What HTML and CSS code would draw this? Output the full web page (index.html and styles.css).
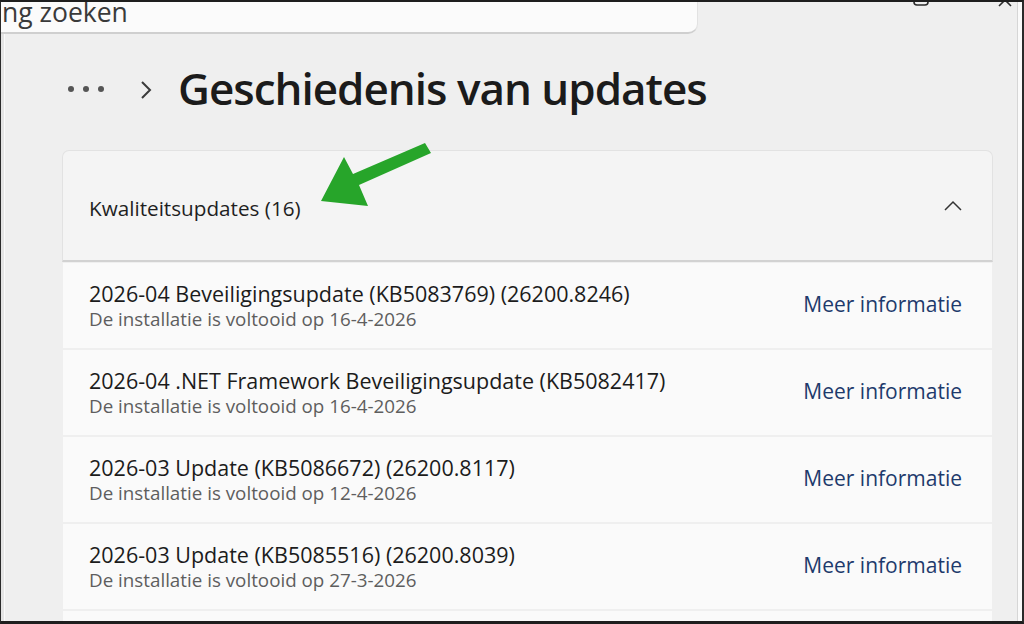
FILE: index.html
```html
<!DOCTYPE html>
<html lang="nl">
<head>
<meta charset="utf-8">
<title>Geschiedenis van updates</title>
<link rel="stylesheet" href="styles.css">
</head>
<body>
<div class="frame">
  <div class="topbar">
    <div class="search">ng zoeken</div>
    <div class="caption">
      <svg class="cap-restore" width="16" height="6" viewBox="0 0 16 6"><path d="M1 -4 V1 Q1 4 4 4 H12 Q15 4 15 1 V-4" fill="none" stroke="#2b2b2b" stroke-width="1.6"/></svg>
      <svg class="cap-close" width="20" height="6" viewBox="0 0 20 6"><path d="M10 -1 L4 5 M10 -1 L16 5" fill="none" stroke="#2b2b2b" stroke-width="1.6"/></svg>
    </div>
  </div>
  <main class="content">
    <div class="crumbs">
      <span class="dots"><i></i><i></i><i></i></span>
      <svg class="chev" width="14" height="20" viewBox="0 0 14 20"><path d="M3 2 L11 10 L3 18" fill="none" stroke="#3a3a3a" stroke-width="2"/></svg>
      <h1 class="title">Geschiedenis van updates</h1>
    </div>
    <section class="card">
      <div class="card-head">
        <span class="head-label">Kwaliteitsupdates (16)</span>
        <svg class="up" width="20" height="12" viewBox="0 0 20 12"><path d="M2 10 L10 2 L18 10" fill="none" stroke="#333" stroke-width="1.5"/></svg>
      </div>
      <div class="rows">
        <div class="row">
          <div class="row-text">
            <div class="row-title">2026-04 Beveiligingsupdate (KB5083769) (26200.8246)</div>
            <div class="row-sub">De installatie is voltooid op 16-4-2026</div>
          </div>
          <a class="more">Meer informatie</a>
        </div>
        <div class="row">
          <div class="row-text">
            <div class="row-title">2026-04 .NET Framework Beveiligingsupdate (KB5082417)</div>
            <div class="row-sub">De installatie is voltooid op 16-4-2026</div>
          </div>
          <a class="more">Meer informatie</a>
        </div>
        <div class="row">
          <div class="row-text">
            <div class="row-title">2026-03 Update (KB5086672) (26200.8117)</div>
            <div class="row-sub">De installatie is voltooid op 12-4-2026</div>
          </div>
          <a class="more">Meer informatie</a>
        </div>
        <div class="row">
          <div class="row-text">
            <div class="row-title">2026-03 Update (KB5085516) (26200.8039)</div>
            <div class="row-sub">De installatie is voltooid op 27-3-2026</div>
          </div>
          <a class="more">Meer informatie</a>
        </div>
        <div class="row"></div>
      </div>
    </section>
  </main>
  <svg class="arrow" width="140" height="90" viewBox="0 0 140 90"><path d="M20 66 L43 22 L52 39 L124 8 L130 18 L58 50 L67 71 Z" fill="#27a52a"/></svg>
</div>
</body>
</html>
```
FILE: styles.css
```css
* { box-sizing: border-box; }
html, body { margin: 0; padding: 0; }
body {
  width: 1024px;
  height: 624px;
  overflow: hidden;
  background: #1e1e1e;
  font-family: "Open Sans", "Noto Sans", sans-serif;
}
.frame {
  position: relative;
  width: 1024px;
  height: 624px;
  overflow: hidden;
  background: #efefef;
  border-top: 2px solid #1e1e1e;
  border-left: 1px solid #2a2a2a;
  border-bottom: 3px solid #1e1e1e;
  border-right: 2px solid #2a2a2a;
  box-shadow: inset -4px 0 0 #fafafa, inset -5px 0 0 #d6d6d6, inset 3px 0 0 #e4e4e4, inset 4px 0 0 #fafafa;
}
.topbar {
  display: flex;
  height: 36px;
  align-items: flex-start;
}
.search {
  width: 697px;
  height: 35px;
  margin-top: -3px;
  background: #fbfbfb;
  border-bottom: 2px solid #cfcfcf;
  border-right: 1px solid #e2e2e2;
  border-bottom-right-radius: 10px;
  font-size: 26.5px;
  line-height: 26px;
  color: #3a3a3a;
  padding-left: 1px;
  position: relative;
  z-index: 1;
}
.caption {
  flex: 1;
  display: flex;
  align-items: flex-start;
}
.cap-restore { margin-left: 215px; margin-top: -1px; }
.cap-close { margin-left: 66px; margin-top: -1px; }
.content {
  padding-left: 61px;
}
.crumbs {
  display: flex;
  align-items: center;
  height: 112px;
  padding-bottom: 12px;
}
.dots {
  display: flex;
  gap: 9px;
  margin-left: 6px;
  margin-top: 2px;
}
.dots i {
  display: block;
  width: 6px;
  height: 6px;
  border-radius: 50%;
  background: #555;
}
.chev { margin-left: 35px; margin-top: 4px; }
.title {
  margin: 0 0 0 25px;
  font-size: 44px;
  font-weight: 600;
  letter-spacing: -1px;
  color: #1b1b1b;
  line-height: 1;
}
.card {
  width: 931px;
}
.card-head {
  height: 112px;
  background: #f4f4f4;
  border: 1px solid #e2e2e2;
  border-bottom: 2px solid #d2d2d2;
  border-radius: 7px 7px 0 0;
  display: flex;
  align-items: center;
  padding: 0 29px 0 26px;
}
.head-label {
  flex: 1;
  font-size: 20.7px;
  color: #1f1f1f;
  margin-top: 4px;
}
.up { margin-top: 0; }
.rows {
  display: flex;
  flex-direction: column;
  gap: 2px;
  padding-top: 1px;
  width: 929px;
  margin-left: 1px;
}
.row {
  height: 85px;
  flex: none;
  background: #fafafa;
  display: flex;
  align-items: center;
  padding: 0 30px 0 26px;
}
.row-text { flex: 1; }
.row-title {
  font-size: 21.5px;
  color: #1c1c1c;
  line-height: 26px;
}
.row-sub {
  font-size: 18.8px;
  color: #5e5e5e;
  line-height: 24px;
}
.more {
  font-size: 21px;
  color: #1e3a6c;
  margin-top: -3px;
}
.arrow {
  position: absolute;
  left: 300px;
  top: 133px;
}
```
